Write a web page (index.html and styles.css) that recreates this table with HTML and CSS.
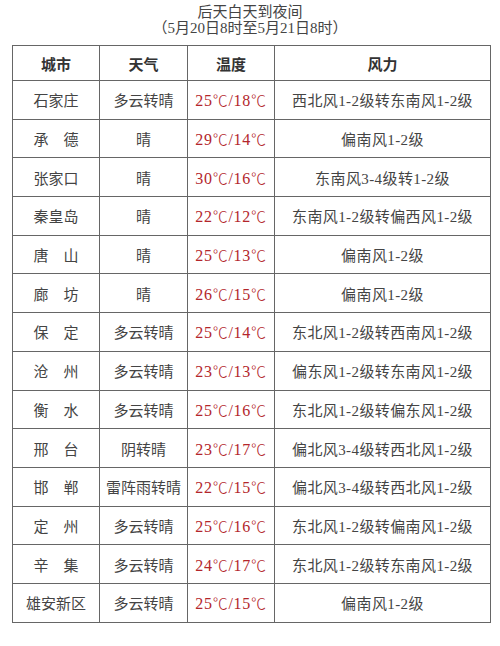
FILE: index.html
```html
<!DOCTYPE html>
<html lang="zh">
<head>
<meta charset="utf-8">
<link rel="stylesheet" href="styles.css">
</head>
<body>
<div class="title">
  <div class="t1">后天白天到夜间</div>
  <div class="t2">（5月20日8时至5月21日8时）</div>
</div>
<table class="wx">
  <colgroup>
    <col class="c1"><col class="c2"><col class="c3"><col class="c4">
  </colgroup>
  <thead>
    <tr class="hd"><th>城市</th><th>天气</th><th>温度</th><th>风力</th></tr>
  </thead>
  <tbody>
    <tr><td>石家庄</td><td>多云转晴</td><td class="tp">25<span class="dc">℃</span>/18<span class="dc">℃</span></td><td>西北风1-2级转东南风1-2级</td></tr>
    <tr><td>承　德</td><td>晴</td><td class="tp">29<span class="dc">℃</span>/14<span class="dc">℃</span></td><td>偏南风1-2级</td></tr>
    <tr><td>张家口</td><td>晴</td><td class="tp">30<span class="dc">℃</span>/16<span class="dc">℃</span></td><td>东南风3-4级转1-2级</td></tr>
    <tr><td>秦皇岛</td><td>晴</td><td class="tp">22<span class="dc">℃</span>/12<span class="dc">℃</span></td><td>东南风1-2级转偏西风1-2级</td></tr>
    <tr><td>唐　山</td><td>晴</td><td class="tp">25<span class="dc">℃</span>/13<span class="dc">℃</span></td><td>偏南风1-2级</td></tr>
    <tr><td>廊　坊</td><td>晴</td><td class="tp">26<span class="dc">℃</span>/15<span class="dc">℃</span></td><td>偏南风1-2级</td></tr>
    <tr><td>保　定</td><td>多云转晴</td><td class="tp">25<span class="dc">℃</span>/14<span class="dc">℃</span></td><td>东北风1-2级转西南风1-2级</td></tr>
    <tr><td>沧　州</td><td>多云转晴</td><td class="tp">23<span class="dc">℃</span>/13<span class="dc">℃</span></td><td>偏东风1-2级转东南风1-2级</td></tr>
    <tr><td>衡　水</td><td>多云转晴</td><td class="tp">25<span class="dc">℃</span>/16<span class="dc">℃</span></td><td>东北风1-2级转偏东风1-2级</td></tr>
    <tr><td>邢　台</td><td>阴转晴</td><td class="tp">23<span class="dc">℃</span>/17<span class="dc">℃</span></td><td>偏北风3-4级转西北风1-2级</td></tr>
    <tr><td>邯　郸</td><td>雷阵雨转晴</td><td class="tp">22<span class="dc">℃</span>/15<span class="dc">℃</span></td><td>偏北风3-4级转西北风1-2级</td></tr>
    <tr><td>定　州</td><td>多云转晴</td><td class="tp">25<span class="dc">℃</span>/16<span class="dc">℃</span></td><td>东北风1-2级转偏南风1-2级</td></tr>
    <tr><td>辛　集</td><td>多云转晴</td><td class="tp">24<span class="dc">℃</span>/17<span class="dc">℃</span></td><td>东北风1-2级转东南风1-2级</td></tr>
    <tr><td>雄安新区</td><td>多云转晴</td><td class="tp">25<span class="dc">℃</span>/15<span class="dc">℃</span></td><td>偏南风1-2级</td></tr>
  </tbody>
</table>
</body>
</html>
```
FILE: styles.css
```css
html, body {
  margin: 0;
  padding: 0;
  background: #ffffff;
}
body {
  width: 500px;
  height: 646px;
  overflow: hidden;
  font-family: "Liberation Serif", "Noto Sans CJK SC", serif;
  color: #444;
}
.title {
  padding-top: 4px;
  text-align: center;
  font-size: 15px;
  line-height: 16px;
  color: #444;
}
.wx {
  margin: 9px 0 0 12px;
  width: 478px;
  border-collapse: collapse;
  table-layout: fixed;
  font-size: 15px;
}
.c1 { width: 87px; }
.c2 { width: 88px; }
.c3 { width: 87px; }
.c4 { width: 216px; }
.wx th, .wx td {
  border: 1px solid #666;
  text-align: center;
  vertical-align: middle;
  padding: 0;
  white-space: nowrap;
}
.wx th {
  height: 34px;
  font-weight: bold;
  color: #333;
}
.wx td {
  height: 37.7px;
}
.wx td:last-child {
  letter-spacing: 0.4px;
}
.wx td.tp {
  color: #b3262b;
  font-size: 16px;
  letter-spacing: 0.7px;
}
.dc {
  font-family: "Noto Sans CJK SC", sans-serif;
  font-size: 15px;
  font-weight: 300;
}
```
